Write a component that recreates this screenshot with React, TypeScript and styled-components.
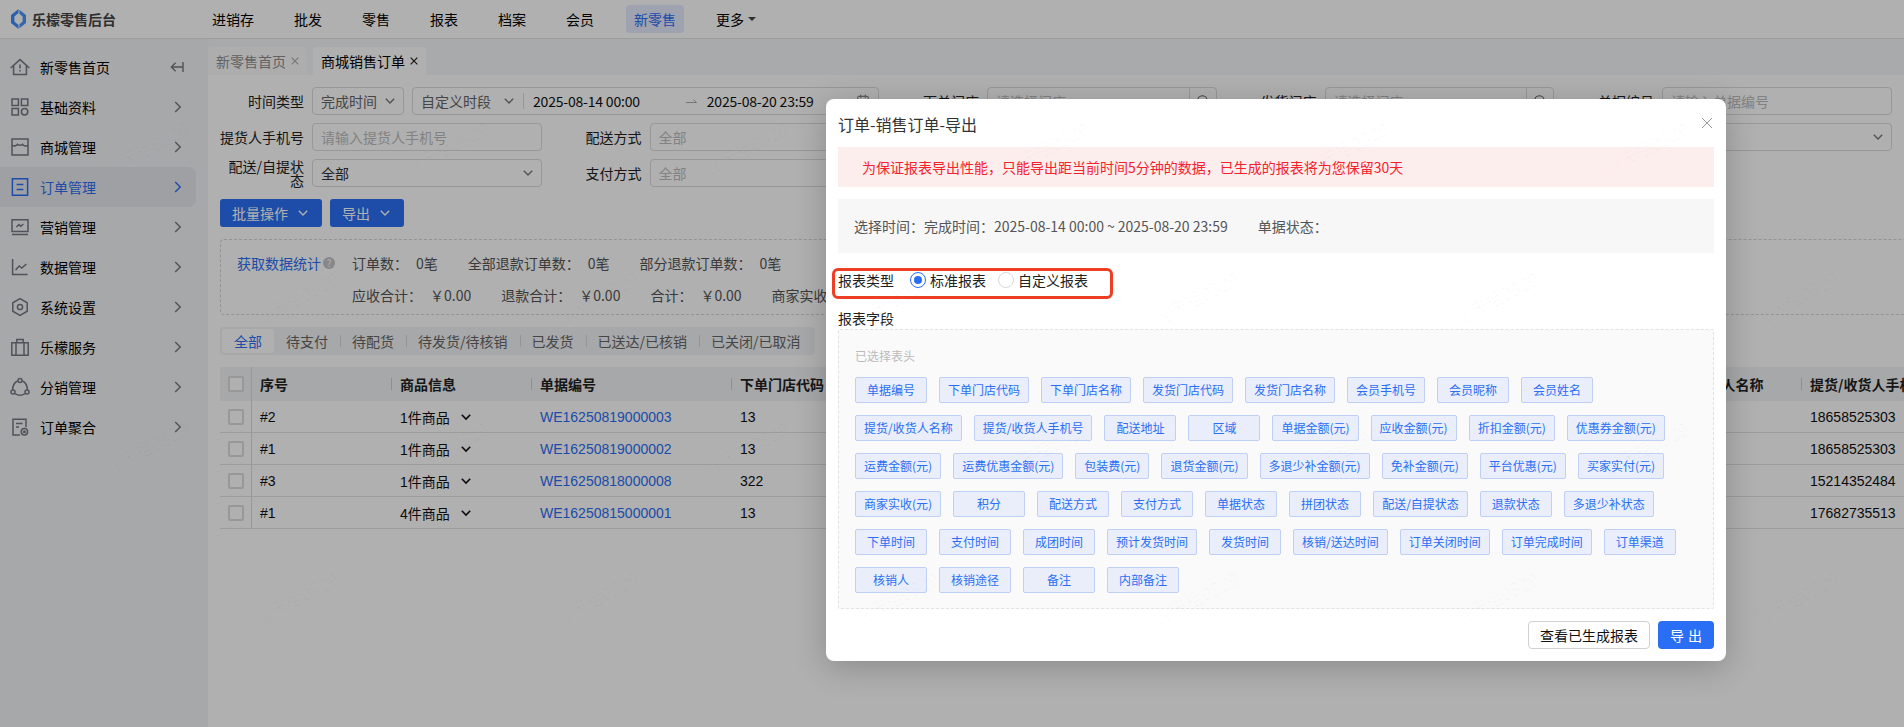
import React from "react";
import styled, { createGlobalStyle } from "styled-components";
import { Calendar, Search } from "lucide-react";

const FONT = `"Noto Sans CJK SC", "Noto Sans", sans-serif`;
const NUM_FONT = `"Liberation Sans", "Noto Sans CJK SC", sans-serif`;
const BLUE = "#2a6ef5";

const GlobalStyle = createGlobalStyle`
  * { box-sizing: border-box; }
  html, body { margin: 0; padding: 0; height: 727px; overflow: hidden; }
  body { font-family: ${FONT}; font-size: 14px; color: #000; background: #fff; }
`;

const Page = styled.div`
  position: relative;
  width: 1904px;
  height: 727px;
  overflow: hidden;
  display: flex;
  flex-direction: column;
`;

/* top bar */
const TopBar = styled.header`
  height: 39px;
  flex: none;
  display: flex;
  align-items: center;
  background: #fff;
  border-bottom: 1px solid #e3e3e3;
`;
const Brand = styled.div`
  width: 204px;
  display: flex;
  align-items: center;
  gap: 6px;
  padding-left: 11px;
  font-size: 14px;
  font-weight: 700;
  color: #444;
  line-height: 20px;
`;
const Nav = styled.nav`
  display: flex;
  gap: 24px;
`;
const NavItem = styled.div<{ $active?: boolean }>`
  height: 28px;
  line-height: 28px;
  padding: 0 8px;
  border-radius: 4px;
  display: flex;
  align-items: center;
  gap: 4px;
  color: ${(p) => (p.$active ? BLUE : "#000")};
  background: ${(p) => (p.$active ? "#e6ecff" : "transparent")};
`;
const Caret = styled.i`
  width: 0;
  height: 0;
  border-left: 4px solid transparent;
  border-right: 4px solid transparent;
  border-top: 4px solid #444;
`;

const Body = styled.div`
  flex: 1;
  display: flex;
  min-height: 0;
`;

/* side menu */
const Sidebar = styled.aside`
  width: 208px;
  flex: none;
  padding-top: 8px;
  background: #f2f3f6;
`;
const MenuItem = styled.div<{ $active?: boolean }>`
  width: 196px;
  height: 40px;
  display: flex;
  align-items: center;
  padding: 0 14px 0 10px;
  border-radius: 0 8px 8px 0;
  line-height: 20px;
  color: ${(p) => (p.$active ? BLUE : "#000")};
  background: ${(p) => (p.$active ? "#e6e8ee" : "transparent")};
  svg.icon { color: ${(p) => (p.$active ? BLUE : "#747985")}; flex: none; }
  span { margin-left: 10px; flex: 1; }
`;

/* main */
const Main = styled.main`
  flex: 1;
  min-width: 0;
  overflow: hidden;
  background: #fff;
`;
const TabBar = styled.div`
  height: 36px;
  display: flex;
  align-items: flex-end;
  gap: 6px;
  background: #f5f6fa;
`;
const PageTab = styled.div<{ $active?: boolean }>`
  height: 28px;
  padding: 0 8px;
  display: flex;
  align-items: center;
  gap: 5px;
  border-radius: 4px 4px 0 0;
  line-height: 20px;
  color: ${(p) => (p.$active ? "#000" : "#8e8e8e")};
  background: ${(p) => (p.$active ? "#fff" : "#fbfbfc")};
`;
const FilterGrid = styled.div`
  display: grid;
  grid-template-columns: repeat(5, 333.5px);
  column-gap: 4px;
  row-gap: 8px;
  padding-top: 12px;
`;
const Field = styled.div<{ $span?: number }>`
  grid-column: span ${(p) => p.$span ?? 1};
  display: flex;
  align-items: center;
  gap: 8px;
  min-height: 28px;
`;
const FieldLabel = styled.label`
  width: 96px;
  padding-left: 8px;
  flex: none;
  text-align: right;
  line-height: 14px;
  color: #222;
`;
const Control = styled.div<{ $width?: number; $tone?: string }>`
  height: 28px;
  flex: ${(p) => (p.$width ? "none" : "1")};
  width: ${(p) => (p.$width ? `${p.$width}px` : "auto")};
  min-width: 0;
  display: flex;
  align-items: center;
  justify-content: space-between;
  padding: 0 8px;
  border: 1px solid #dcdcdc;
  border-radius: 4px;
  line-height: 20px;
  white-space: nowrap;
  color: ${(p) => p.$tone ?? "#333"};
  background: #fff;
`;
const RangeDivider = styled.i`
  width: 1px;
  height: 16px;
  margin: 0 9px;
  flex: none;
  background: #dcdcdc;
`;
const RangeStart = styled.span`
  margin-right: 46px;
  letter-spacing: -0.2px;
  color: #111;
`;
const RangeEnd = styled.span`
  margin-left: 10px;
  margin-right: auto;
  letter-spacing: -0.2px;
  color: #111;
`;
const SearchAddon = styled.span`
  width: 27px;
  height: 26px;
  margin-right: -8px;
  flex: none;
  display: flex;
  align-items: center;
  justify-content: center;
  border-left: 1px solid #dcdcdc;
`;
const ToolRow = styled.div`
  display: flex;
  gap: 8px;
  padding: 12px 0 0 12px;
`;
const PrimaryButton = styled.button`
  height: 28px;
  display: flex;
  align-items: center;
  gap: 10px;
  padding: 0 14px 0 12px;
  border: 0;
  border-radius: 3px;
  font: inherit;
  line-height: 20px;
  color: #fff;
  background: ${BLUE};
`;
const StatsBox = styled.div`
  width: 1700px;
  height: 76px;
  margin: 12px 0 0 12px;
  padding: 7px 16px 0;
  display: flex;
  border: 1px dashed #d6d6d6;
  border-radius: 4px;
`;
const StatsLink = styled.div`
  width: 115px;
  height: 32px;
  flex: none;
  display: flex;
  align-items: center;
  gap: 2px;
  color: ${BLUE};
`;
const HelpDot = styled.i`
  width: 12px;
  height: 12px;
  border-radius: 50%;
  font-style: normal;
  font-size: 10px;
  line-height: 12px;
  text-align: center;
  color: #fff;
  background: #c4c4c8;
`;
const StatRows = styled.div`
  display: flex;
  flex-direction: column;
`;
const StatRow = styled.div`
  height: 32px;
  display: flex;
  align-items: center;
  gap: 30px;
  color: #555;
`;
const Stat = styled.div`
  display: flex;
  gap: 8px;
  white-space: nowrap;
`;
const StatusTabs = styled.div`
  width: fit-content;
  height: 28px;
  margin: 12px 0 0 12px;
  padding: 2px;
  display: flex;
  align-items: center;
  border-radius: 4px;
  background: #f2f3f6;
`;
const StatusTab = styled.div<{ $active?: boolean }>`
  height: 24px;
  padding: 0 12px;
  line-height: 24px;
  border-radius: 3px;
  white-space: nowrap;
  color: ${(p) => (p.$active ? BLUE : "#666")};
  background: ${(p) => (p.$active ? "#fff" : "transparent")};
`;
const TabSep = styled.i`
  width: 1px;
  height: 12px;
  margin-right: -1px;
  background: #d8d8d8;
`;

/* table */
const COLUMNS = "32px 140px 140px 200px 140px 200px 140px 200px 240px 150px 200px";
const Table = styled.div`
  width: 1782px;
  margin: 12px 0 0 12px;
  font-family: ${NUM_FONT};
`;
const HeadRow = styled.div`
  display: grid;
  grid-template-columns: ${COLUMNS};
  height: 34px;
  background: #f2f3f6;
`;
const HeadCell = styled.div`
  display: flex;
  align-items: center;
  justify-content: space-between;
  padding-left: 8px;
  font-family: ${FONT};
  font-weight: 700;
  white-space: nowrap;
  overflow: hidden;
  color: #222;
  &::after {
    content: "";
    width: 1px;
    height: 12px;
    flex: none;
    background: #d0d0d0;
  }
`;
const BodyRow = styled.div`
  display: grid;
  grid-template-columns: ${COLUMNS};
  height: 32px;
  border-bottom: 1px solid #e3e3e3;
`;
const Cell = styled.div`
  display: flex;
  align-items: center;
  padding-left: 8px;
  white-space: nowrap;
  color: #111;
`;
const CheckCell = styled.div`
  display: flex;
  align-items: center;
  padding-left: 8px;
  border-right: 1px solid #dcdcdc;
`;
const CheckBox = styled.i`
  width: 16px;
  height: 16px;
  border: 2px solid #dcdcdc;
  border-radius: 2px;
  background: #fff;
`;
const Goods = styled.span`
  font-family: ${NUM_FONT};
  margin-right: 11px;
`;
const Link = styled.span`
  color: ${BLUE};
`;

/* dialog */
const Mask = styled.div`
  position: absolute;
  inset: 0;
  background: rgba(0, 0, 0, 0.31);
`;
const Dialog = styled.section`
  position: absolute;
  left: 826px;
  top: 99px;
  width: 900px;
  height: 562px;
  padding: 12px;
  border-radius: 8px;
  background: #fff;
  box-shadow: 0 6px 32px rgba(0, 0, 0, 0.22);
`;
const DialogHead = styled.div`
  height: 26px;
  margin-bottom: 10px;
  display: flex;
  align-items: center;
  justify-content: space-between;
  font-size: 16px;
  line-height: 26px;
  color: #333;
  svg { margin: 0 1px 2px 0; }
`;
const Alert = styled.div`
  height: 40px;
  padding-left: 24px;
  line-height: 40px;
  color: #f5222d;
  background: #fdeeee;
`;
const Info = styled.div`
  height: 54px;
  margin-top: 12px;
  padding-left: 16px;
  display: flex;
  align-items: center;
  gap: 30px;
  color: #555;
  background: #f7f7f7;
`;
const Tilde = styled.span`
  margin: 0 3px;
`;
const ReportRow = styled.div`
  position: relative;
  height: 28px;
  margin-top: 13px;
  display: flex;
  align-items: center;
  color: #222;
`;
const Annotation = styled.div`
  position: absolute;
  left: -6px;
  top: 2px;
  width: 281px;
  height: 31px;
  border: 3px solid #ee3f24;
  border-radius: 6px;
`;
const RadioOption = styled.label`
  display: flex;
  align-items: center;
  gap: 4px;
  margin-left: 16px;
  & + & { margin-left: 12px; }
`;
const RadioDot = styled.i<{ $checked?: boolean }>`
  width: 16px;
  height: 16px;
  border-radius: 50%;
  border: 1px solid ${(p) => (p.$checked ? BLUE : "#d9d9d9")};
  display: flex;
  align-items: center;
  justify-content: center;
  &::after {
    content: "";
    width: 8px;
    height: 8px;
    border-radius: 50%;
    background: ${(p) => (p.$checked ? BLUE : "transparent")};
  }
`;
const SectionLabel = styled.div`
  height: 20px;
  margin: 14px 0 1px;
  line-height: 20px;
  color: #222;
`;
const FieldBox = styled.div`
  height: 280px;
  padding: 16px 16px 0;
  border: 1px dashed #e2e2e2;
  border-radius: 2px;
  background: #fafafa;
`;
const FieldHint = styled.div`
  height: 20px;
  font-size: 12px;
  line-height: 20px;
  color: #bbb;
`;
const Chips = styled.div`
  margin-top: 11px;
  display: flex;
  flex-wrap: wrap;
  gap: 12px;
`;
const Chip = styled.div`
  min-width: 72px;
  height: 26px;
  padding: 0 8px;
  border: 1px solid #bfcff5;
  border-radius: 2px;
  font-size: 12px;
  line-height: 24px;
  text-align: center;
  white-space: nowrap;
  color: ${BLUE};
  background: #e9eefa;
`;
const DialogFoot = styled.div`
  margin-top: 12px;
  display: flex;
  justify-content: flex-end;
  gap: 8px;
`;
const GhostButton = styled.button`
  height: 28px;
  width: 122px;
  padding: 0;
  border: 1px solid #d0d0d0;
  border-radius: 4px;
  font: inherit;
  color: #111;
  background: #fff;
`;
const ExportButton = styled.button`
  height: 28px;
  width: 56px;
  padding: 0;
  border: 0;
  border-radius: 4px;
  font: inherit;
  word-spacing: 1px;
  color: #fff;
  background: ${BLUE};
`;

/* watermark */
const WatermarkLayer = styled.div`
  position: absolute;
  inset: 0;
  overflow: hidden;
  pointer-events: none;
`;
const Mark = styled.span`
  position: absolute;
  font-size: 18px;
  line-height: 20px;
  white-space: nowrap;
  color: rgba(0, 0, 0, 0.028);
  transform: translate(-50%, -50%) rotate(-27deg);
`;

/* icons */
const Ico = ({ children, size = 20 }: { children: React.ReactNode; size?: number }) => (
  <svg className="icon" width={size} height={size} viewBox="0 0 20 20" fill="none" stroke="currentColor" strokeWidth="1.5">
    {children}
  </svg>
);
const Chevron = ({ size = 10, color = "#777", sw = 1.4 }: { size?: number; color?: string; sw?: number }) => (
  <svg width={size} height={size} viewBox="0 0 10 10" fill="none" stroke={color} strokeWidth={sw} style={{ flex: "none" }}>
    <path d="M.8 2.8 5 7l4.2-4.2" />
  </svg>
);
const ChevronRight = ({ color = "#777" }: { color?: string }) => (
  <svg width="8" height="12" viewBox="0 0 8 12" fill="none" stroke={color} strokeWidth="1.4">
    <path d="M1.2 1 6.2 6l-5 5" />
  </svg>
);
const Logo = () => (
  <svg width="15" height="20" viewBox="0 0 15 20">
    <path d="M7.5 0 0 6v8l7.5 6v-4L3.4 12.5v-5L7.5 4Z" fill="#3d8cff" />
    <path d="M8.4.8 15 6v8l-6.6 5.2v-4l3.2-2.7v-5L8.4 4.8Z" fill="#4a96fa" />
  </svg>
);
const Close = ({ size, color, sw }: { size: number; color: string; sw: number }) => (
  <svg width={size} height={size} viewBox="0 0 12 12" stroke={color} strokeWidth={sw} fill="none" style={{ flex: "none" }}>
    <path d="M1 1l10 10M11 1 1 11" />
  </svg>
);
const RangeArrow = () => (
  <svg width="11" height="6" viewBox="0 0 11 6" fill="none" stroke="#aaa">
    <path d="M0 4.5h10.5L7.5 1.5" />
  </svg>
);

const MENU: { label: string; icon: React.ReactNode }[] = [
  {
    label: "新零售首页",
    icon: (<Ico><path d="M.6 11 10 2.6 19.4 11M3.6 8.6V17.6H16.4V8.6M10 7.4v4.2M10 13v1.4" /></Ico>),
  },
  {
    label: "基础资料",
    icon: (<Ico><path d="M2 2h6.4v6.4H2zM11.4 2h6.4v6.4h-6.4zM2 11.6h6.4V18H2z" /><circle cx="14.6" cy="14.8" r="3.2" /></Ico>),
  },
  {
    label: "商城管理",
    icon: (<Ico><path d="M2 2h16v16H2zM2 8c2.5 2 5 0 5.4-.6C8 8.6 12 8.6 12.6 7.4 13.4 8.6 16 10 18 8" /></Ico>),
  },
  {
    label: "订单管理",
    icon: (<Ico><path d="M2.4 1.8h15.2v16.4H2.4zM6.6 7.4h6.8M6.6 12.4h6.8" /></Ico>),
  },
  {
    label: "营销管理",
    icon: (<Ico><path d="M2 2.8h16v11.6H2zM2 17.6h16M6.4 10l2.6-2.4 1.8 1.6 2.6-2.2" /></Ico>),
  },
  {
    label: "数据管理",
    icon: (<Ico><path d="M2.6 2v15.6h15M5.6 13l3.6-4 2.6 2 4.6-4" /></Ico>),
  },
  {
    label: "系统设置",
    icon: (<Ico><path d="M10 1.6 17.2 5.8v8.4L10 18.4 2.8 14.2V5.8Z" /><circle cx="10" cy="10" r="2.6" /></Ico>),
  },
  {
    label: "乐檬服务",
    icon: (<Ico><path d="M1.8 5.8h16.4v12.4H1.8zM6 5.8V18M14 5.8V18M6.8 5.8V2.4h6.4v3.4" /></Ico>),
  },
  {
    label: "分销管理",
    icon: (<Ico><circle cx="10" cy="3.4" r="2" /><circle cx="3" cy="15" r="2" /><circle cx="17" cy="15" r="2" /><path d="M7.6 4C4.6 5.4 2.6 8.6 2.6 13M12.4 4c3 1.4 5 4.6 5 9M5 16.6c3 2 7 2 10 0" /></Ico>),
  },
  {
    label: "订单聚合",
    icon: (<Ico><path d="M10 18H3V2.2h13v8M6 6.4h6.6M6 10h3" /><circle cx="14.4" cy="14.8" r="3.2" /><circle cx="14.4" cy="14.8" r=".8" /></Ico>),
  },
];

const STATUS = ["全部", "待支付", "待配货", "待发货/待核销", "已发货", "已送达/已核销", "已关闭/已取消"];

const HEADS = ["序号", "商品信息", "单据编号", "下单门店代码", "下单门店名称", "发货门店代码", "发货门店名称", "会员手机号", "提货/收货人名称", "提货/收货人手机号"];

const ROWS = [
  { seq: "#2", goods: "1件商品", no: "WE16250819000003", store: "13", phone: "18658525303" },
  { seq: "#1", goods: "1件商品", no: "WE16250819000002", store: "13", phone: "18658525303" },
  { seq: "#3", goods: "1件商品", no: "WE16250818000008", store: "322", phone: "15214352484" },
  { seq: "#1", goods: "4件商品", no: "WE16250815000001", store: "13", phone: "17682735513" },
];

const FIELDS = [
  "单据编号", "下单门店代码", "下单门店名称", "发货门店代码", "发货门店名称", "会员手机号", "会员昵称", "会员姓名",
  "提货/收货人名称", "提货/收货人手机号", "配送地址", "区域", "单据金额(元)", "应收金额(元)", "折扣金额(元)", "优惠券金额(元)",
  "运费金额(元)", "运费优惠金额(元)", "包装费(元)", "退货金额(元)", "多退少补金额(元)", "免补金额(元)", "平台优惠(元)", "买家实付(元)",
  "商家实收(元)", "积分", "配送方式", "支付方式", "单据状态", "拼团状态", "配送/自提状态", "退款状态", "多退少补状态",
  "下单时间", "支付时间", "成团时间", "预计发货时间", "发货时间", "核销/送达时间", "订单关闭时间", "订单完成时间", "订单渠道",
  "核销人", "核销途径", "备注", "内部备注",
];

const NAV = ["进销存", "批发", "零售", "报表", "档案", "会员"];

const MARKS: { x: number; y: number }[] = [];
[148, 298, 448, 598].forEach((y, row) => {
  for (let i = 0; i < 7; i++) {
    const x = (row % 2 === 0 ? 145 : 295) + i * 300;
    if (x < 1860) MARKS.push({ x, y });
  }
});

const PLACEHOLDER = "#bdbdbd";

export default function App() {
  return (
    <Page>
      <GlobalStyle />
      <TopBar>
        <Brand>
          <Logo />
          乐檬零售后台
        </Brand>
        <Nav>
          {NAV.map((n) => (
            <NavItem key={n}>{n}</NavItem>
          ))}
          <NavItem $active>新零售</NavItem>
          <NavItem>
            更多
            <Caret />
          </NavItem>
        </Nav>
      </TopBar>
      <Body>
        <Sidebar>
          {MENU.map((m, i) => (
            <MenuItem key={m.label} $active={m.label === "订单管理"}>
              {m.icon}
              <span>{m.label}</span>
              {i === 0 ? (
                <svg width="14" height="12" viewBox="0 0 14 12" fill="none" stroke="#777" strokeWidth="1.4" style={{ marginRight: -2 }}>
                  <path d="M13 1v10M12.4 6H1.4M5.6 1.8 1.4 6l4.2 4.2" />
                </svg>
              ) : (
                <ChevronRight color={m.label === "订单管理" ? BLUE : "#777"} />
              )}
            </MenuItem>
          ))}
        </Sidebar>
        <Main>
          <TabBar>
            <PageTab>
              新零售首页
              <Close size={8} color="#aaa" sw={1.6} />
            </PageTab>
            <PageTab $active>
              商城销售订单
              <Close size={8} color="#222" sw={1.8} />
            </PageTab>
          </TabBar>
          <FilterGrid>
            <Field $span={2}>
              <FieldLabel>时间类型</FieldLabel>
              <Control $width={92} $tone="#666">
                完成时间
                <Chevron />
              </Control>
              <Control $tone="#666">
                自定义时段
                <span style={{ width: 13 }} />
                <Chevron />
                <RangeDivider />
                <RangeStart>2025-08-14 00:00</RangeStart>
                <RangeArrow />
                <RangeEnd>2025-08-20 23:59</RangeEnd>
                <Calendar size={14} color="#888" />
              </Control>
            </Field>
            <Field>
              <FieldLabel>下单门店</FieldLabel>
              <Control $tone={PLACEHOLDER}>
                请选择门店
                <SearchAddon>
                  <Search size={14} color="#555" />
                </SearchAddon>
              </Control>
            </Field>
            <Field>
              <FieldLabel>发货门店</FieldLabel>
              <Control $tone={PLACEHOLDER}>
                请选择门店
                <SearchAddon>
                  <Search size={14} color="#555" />
                </SearchAddon>
              </Control>
            </Field>
            <Field>
              <FieldLabel>单据编号</FieldLabel>
              <Control $tone={PLACEHOLDER}>请输入单据编号</Control>
            </Field>

            <Field>
              <FieldLabel>提货人手机号</FieldLabel>
              <Control $tone={PLACEHOLDER}>请输入提货人手机号</Control>
            </Field>
            <Field>
              <FieldLabel>配送方式</FieldLabel>
              <Control $tone={PLACEHOLDER}>全部</Control>
            </Field>
            <Field />
            <Field />
            <Field>
              <FieldLabel />
              <Control>
                <span />
                <Chevron />
              </Control>
            </Field>

            <Field>
              <FieldLabel>配送/自提状态</FieldLabel>
              <Control>
                全部
                <Chevron />
              </Control>
            </Field>
            <Field>
              <FieldLabel>支付方式</FieldLabel>
              <Control $tone={PLACEHOLDER}>全部</Control>
            </Field>
          </FilterGrid>
          <ToolRow>
            <PrimaryButton>
              批量操作
              <Chevron color="#fff" />
            </PrimaryButton>
            <PrimaryButton>
              导出
              <Chevron color="#fff" />
            </PrimaryButton>
          </ToolRow>
          <StatsBox>
            <StatsLink>
              获取数据统计
              <HelpDot>?</HelpDot>
            </StatsLink>
            <StatRows>
              <StatRow>
                <Stat><span>订单数：</span><span>0笔</span></Stat>
                <Stat><span>全部退款订单数：</span><span>0笔</span></Stat>
                <Stat><span>部分退款订单数：</span><span>0笔</span></Stat>
              </StatRow>
              <StatRow>
                <Stat><span>应收合计：</span><span>￥0.00</span></Stat>
                <Stat><span>退款合计：</span><span>￥0.00</span></Stat>
                <Stat><span>合计：</span><span>￥0.00</span></Stat>
                <Stat><span>商家实收：</span><span>￥0.00</span></Stat>
              </StatRow>
            </StatRows>
          </StatsBox>
          <StatusTabs>
            {STATUS.map((s, i) => (
              <React.Fragment key={s}>
                {i > 1 && <TabSep />}
                <StatusTab $active={i === 0}>{s}</StatusTab>
              </React.Fragment>
            ))}
          </StatusTabs>
          <Table>
            <HeadRow>
              <CheckCell><CheckBox /></CheckCell>
              {HEADS.map((h) => (
                <HeadCell key={h}>{h}</HeadCell>
              ))}
            </HeadRow>
            {ROWS.map((r) => (
              <BodyRow key={r.no}>
                <CheckCell><CheckBox /></CheckCell>
                <Cell>{r.seq}</Cell>
                <Cell>
                  <Goods>{r.goods}</Goods>
                  <Chevron color="#111" sw={1.6} />
                </Cell>
                <Cell><Link>{r.no}</Link></Cell>
                <Cell>{r.store}</Cell>
                <Cell />
                <Cell />
                <Cell />
                <Cell />
                <Cell />
                <Cell>{r.phone}</Cell>
              </BodyRow>
            ))}
          </Table>
        </Main>
      </Body>
      <Mask>
        <Dialog>
          <DialogHead>
            订单-销售订单-导出
            <Close size={12} color="#999" sw={1} />
          </DialogHead>
          <Alert>为保证报表导出性能，只能导出距当前时间5分钟的数据，已生成的报表将为您保留30天</Alert>
          <Info>
            <span>选择时间：完成时间：2025-08-14 00:00<Tilde>~</Tilde>2025-08-20 23:59</span>
            <span>单据状态：</span>
          </Info>
          <ReportRow>
            报表类型
            <RadioOption>
              <RadioDot $checked />
              标准报表
            </RadioOption>
            <RadioOption>
              <RadioDot />
              自定义报表
            </RadioOption>
            <Annotation />
          </ReportRow>
          <SectionLabel>报表字段</SectionLabel>
          <FieldBox>
            <FieldHint>已选择表头</FieldHint>
            <Chips>
              {FIELDS.map((f) => (
                <Chip key={f}>{f}</Chip>
              ))}
            </Chips>
          </FieldBox>
          <DialogFoot>
            <GhostButton>查看已生成报表</GhostButton>
            <ExportButton>导 出</ExportButton>
          </DialogFoot>
        </Dialog>
      </Mask>
      <WatermarkLayer>
        {MARKS.map((m, i) => (
          <Mark key={i} style={{ left: m.x, top: m.y }}>曾庆祖0829</Mark>
        ))}
      </WatermarkLayer>
    </Page>
  );
}
